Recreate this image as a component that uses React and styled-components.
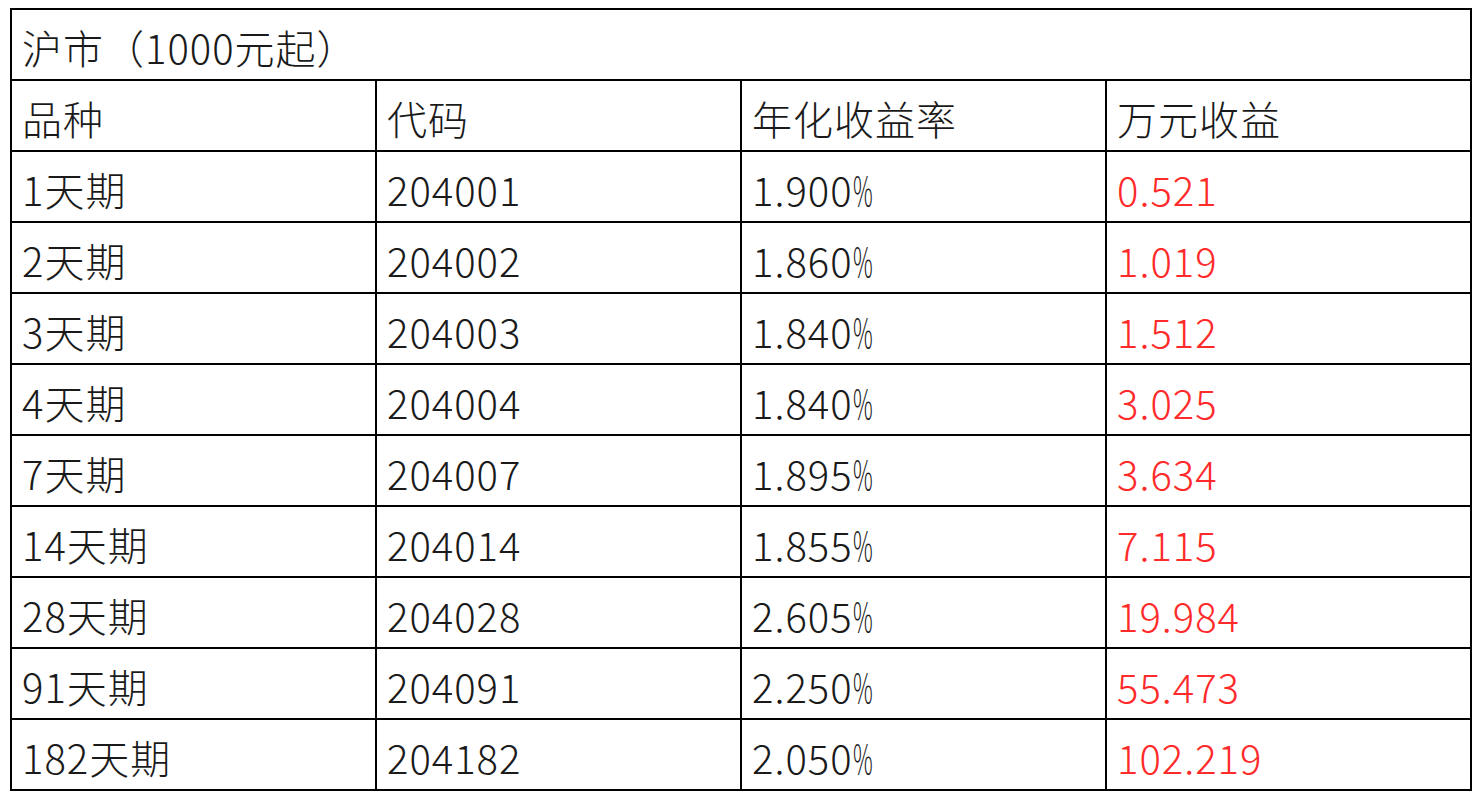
import React from "react";
import styled, { createGlobalStyle } from "styled-components";

const Global = createGlobalStyle`
  html, body { margin: 0; padding: 0; background: #ffffff; }
  body { font-family: "Noto Sans CJK SC", "Noto Sans", sans-serif; }
`;

const Page = styled.div`
  padding: 8px 0 0 10px;
`;

const Table = styled.table`
  border-collapse: collapse;
  width: 1460px;
  table-layout: fixed;
  color: #111;
  font-size: 40px;
  font-weight: 300;
  letter-spacing: 1px;
`;

const Row = styled.tr`
  height: 71px;
`;

const Cell = styled.td`
  border: 2px solid #000;
  padding: 5px 0 0 10px;
  line-height: 1;
  vertical-align: middle;
  white-space: nowrap;
  color: ${(p) => (p.$red ? "#ff2a2a" : "#1a1a1a")};
`;

const Pct = styled.span`
  display: inline-block;
  transform: scaleX(0.55);
  transform-origin: left center;
`;

const rows = [
  ["1天期", "204001", "1.900", "0.521"],
  ["2天期", "204002", "1.860", "1.019"],
  ["3天期", "204003", "1.840", "1.512"],
  ["4天期", "204004", "1.840", "3.025"],
  ["7天期", "204007", "1.895", "3.634"],
  ["14天期", "204014", "1.855", "7.115"],
  ["28天期", "204028", "2.605", "19.984"],
  ["91天期", "204091", "2.250", "55.473"],
  ["182天期", "204182", "2.050", "102.219"],
];

export default function App() {
  return (
    <Page>
      <Global />
      <Table>
        <colgroup>
          <col style={{ width: "365px" }} />
          <col style={{ width: "365px" }} />
          <col style={{ width: "365px" }} />
          <col style={{ width: "365px" }} />
        </colgroup>
        <tbody>
          <Row>
            <Cell colSpan={4}>沪市（1000元起）</Cell>
          </Row>
          <Row>
            <Cell>品种</Cell>
            <Cell>代码</Cell>
            <Cell>年化收益率</Cell>
            <Cell>万元收益</Cell>
          </Row>
          {rows.map((r) => (
            <Row key={r[1]}>
              <Cell>{r[0]}</Cell>
              <Cell>{r[1]}</Cell>
              <Cell>
                {r[2]}
                <Pct>%</Pct>
              </Cell>
              <Cell $red>{r[3]}</Cell>
            </Row>
          ))}
        </tbody>
      </Table>
    </Page>
  );
}
